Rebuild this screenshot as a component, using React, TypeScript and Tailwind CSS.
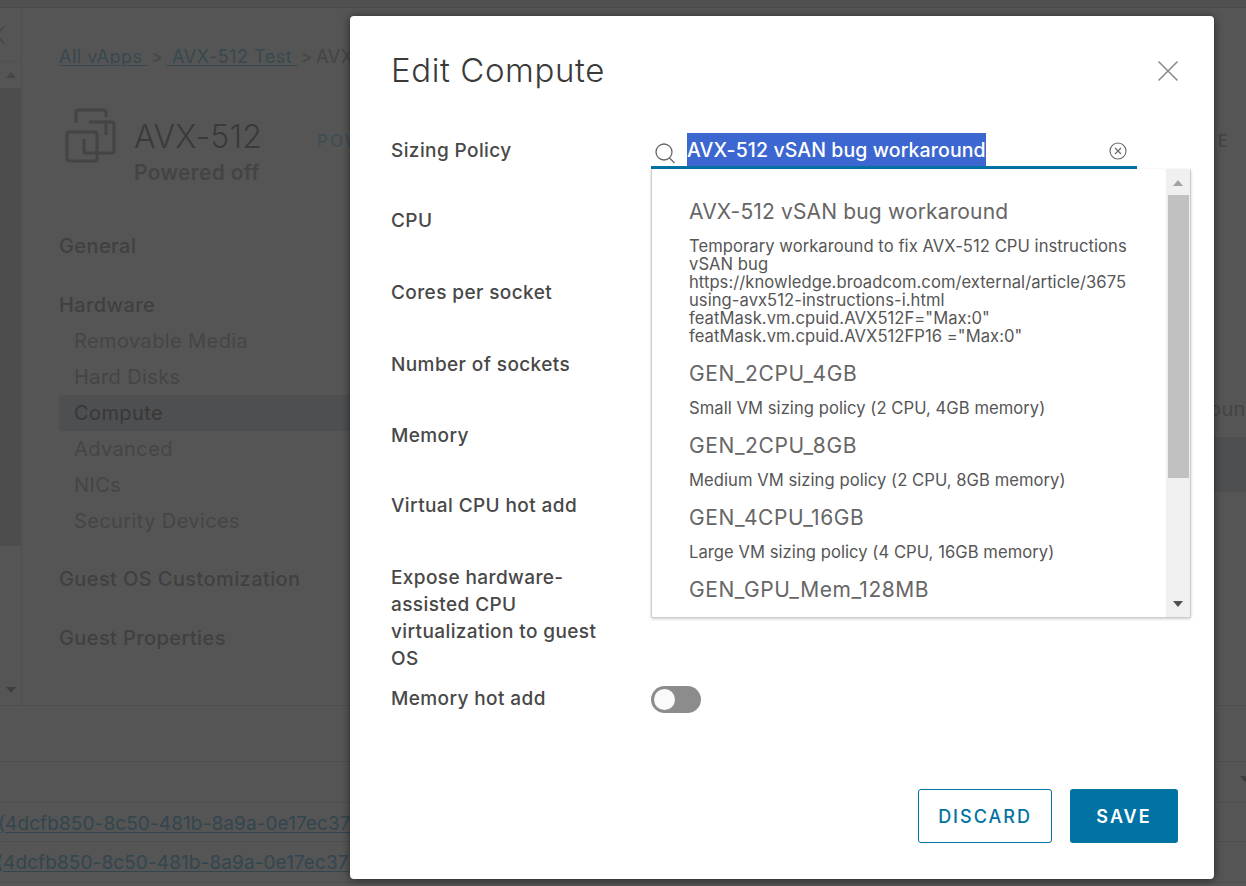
import { X } from "lucide-react";

const formRows = [
  { label: "Sizing Policy", height: "h-[70px]" },
  { label: "CPU", height: "h-[72px]" },
  { label: "Cores per socket", height: "h-[72px]" },
  { label: "Number of sockets", height: "h-[71px]" },
  { label: "Memory", height: "h-[70px]" },
  { label: "Virtual CPU hot add", height: "h-[72px]" },
];

const policies = [
  {
    name: "AVX-512 vSAN bug workaround",
    tracking: "tracking-[0.15px]",
    lines: [
      "Temporary workaround to fix AVX-512 CPU instructions",
      "vSAN bug",
      "https://knowledge.broadcom.com/external/article/3675",
      "using-avx512-instructions-i.html",
      'featMask.vm.cpuid.AVX512F="Max:0"',
      'featMask.vm.cpuid.AVX512FP16 ="Max:0"',
    ],
  },
  { name: "GEN_2CPU_4GB", tracking: "tracking-[0.6px]", lines: ["Small VM sizing policy (2 CPU, 4GB memory)"] },
  { name: "GEN_2CPU_8GB", tracking: "tracking-[0.6px]", lines: ["Medium VM sizing policy (2 CPU, 8GB memory)"] },
  { name: "GEN_4CPU_16GB", tracking: "tracking-[0.6px]", lines: ["Large VM sizing policy (4 CPU, 16GB memory)"] },
  { name: "GEN_GPU_Mem_128MB", tracking: "tracking-[0.55px]", lines: [] },
];

const hardwareItems = ["Removable Media", "Hard Disks", "Compute", "Advanced", "NICs", "Security Devices"];

function VappIcon() {
  return (
    <svg className="-mt-[13px] shrink-0" width="62" height="62" viewBox="0 0 62 62" fill="none" stroke="#444444" strokeWidth="3">
      <path d="M16 19V8a2 2 0 0 1 2-2h26a2 2 0 0 1 2 2v5" />
      <path d="M29 18h23a2 2 0 0 1 2 2v27a2 2 0 0 1-2 2H26a2 2 0 0 1-2-2V35" />
      <path d="M46 18v13" />
      <rect x="7" y="28" width="30" height="29" rx="2" />
    </svg>
  );
}

function Background() {
  return (
    <div className="flex h-full flex-col text-[#404040]">
      <div className="h-[8px] shrink-0 border-b border-[#4a4a4a] bg-[#505050]" />
      <div className="flex h-[698px] shrink-0 border-b border-[#4d4d4d]">
        <div className="flex w-[22px] shrink-0 flex-col border-r border-[#505050]">
          <div className="relative h-[54px] border-b border-[#505050]">
            <X className="absolute -left-[20px] top-[11px] text-[#444444]" size={32} strokeWidth={1} />
          </div>
          <div className="flex h-[26px] items-center justify-center">
            <div className="h-0 w-0 border-x-[5px] border-b-[6px] border-x-transparent border-b-[#464646]" />
          </div>
          <div className="h-[458px] bg-[#4d4d4d]" />
          <div className="mt-[141px] flex justify-center">
            <div className="h-0 w-0 border-x-[5px] border-t-[6px] border-x-transparent border-t-[#3f3f3f]" />
          </div>
        </div>
        <div className="min-w-0 flex-1 pl-[37px]">
          <div className="mt-[37px] flex h-[22px] items-center whitespace-nowrap text-[18px] tracking-[0.5px] text-[#384850]">
            <span className="underline decoration-1 underline-offset-2">All vApps&nbsp;</span>
            <span className="mx-[3px] text-[#444444]">&gt;</span>
            <span className="underline decoration-1 underline-offset-2">&nbsp;AVX-512 Test&nbsp;</span>
            <span className="mx-[3px] text-[#444444]">&gt;</span>
            <span className="text-[#444444]">AVX-512</span>
          </div>
          <div className="ml-[1px] mt-[50px] flex">
            <VappIcon />
            <div className="ml-[12px] w-[183px]">
              <div className="h-[40px] text-[32px] font-light leading-[40px] tracking-[0.2px] text-[#3a3a3a]">AVX-512</div>
              <div className="mt-[3px] text-[21px] font-semibold leading-[26px] tracking-[0.3px] text-[#444444]">Powered off</div>
            </div>
            <div className="mt-[12px] text-[17px] font-medium tracking-[2px] text-[#3f4d55]">POWER ON</div>
            <div className="ml-auto mr-[16px] mt-[12px] text-[17px] font-medium tracking-[2px] text-[#444444]">E</div>
          </div>
          <div className="mt-[46px] flex tracking-[0.4px]">
            <div className="w-[291px] shrink-0">
              <div className="text-[20px] font-medium leading-[28px]">General</div>
              <div className="mt-[31px] text-[20px] font-medium leading-[28px]">Hardware</div>
              <div className="mt-[4px]">
                {hardwareItems.map((item) => (
                  <div
                    key={item}
                    className={`h-[36px] rounded-l-[3px] pl-[15px] text-[20px] leading-[36px] ${
                      item === "Compute" ? "bg-[#4d4f51] text-[#383838]" : "text-[#454545]"
                    }`}
                  >
                    {item}
                  </div>
                ))}
              </div>
              <div className="mt-[26px] text-[20px] font-medium leading-[28px]">Guest OS Customization</div>
              <div className="mt-[31px] text-[20px] font-medium leading-[28px]">Guest Properties</div>
            </div>
            <div className="ml-[559px] flex-1 overflow-hidden">
              <div className="mt-[163px] whitespace-nowrap pl-[300px] text-[20px] leading-[28px] text-[#444444]">ound</div>
              <div className="mt-[14px] h-[55px] bg-[#4d4f51]" />
            </div>
          </div>
        </div>
      </div>
      <div className="h-[56px] shrink-0 border-b border-[#4d4d4d]" />
      <div className="-mr-[4px] flex h-[41px] shrink-0 items-center justify-end border-b border-[#4d4d4d] pb-[6px]">
        <div className="h-0 w-0 border-x-[5px] border-t-[6px] border-x-transparent border-t-[#3f3f3f]" />
      </div>
      <div className="h-[39px] shrink-0 overflow-hidden whitespace-nowrap border-b border-[#4d4d4d] text-[19px] leading-[41px] tracking-[0.1px] text-[#33464f]">
        <span className="-ml-[2px] inline-block underline decoration-1 underline-offset-2">(4dcfb850-8c50-481b-8a9a-0e17ec37</span>
      </div>
      <div className="h-[41px] shrink-0 overflow-hidden whitespace-nowrap border-b border-[#4d4d4d] text-[19px] leading-[41px] tracking-[0.1px] text-[#33464f]">
        <span className="-ml-[4px] inline-block underline decoration-1 underline-offset-2">(4dcfb850-8c50-481b-8a9a-0e17ec37</span>
      </div>
    </div>
  );
}

function PolicyDropdown() {
  return (
    <div className="absolute left-[301px] top-[153px] flex h-[449px] w-[540px] overflow-hidden rounded-[2px] border-x border-b border-[#cccccc] bg-white shadow-[0_1px_3px_rgba(0,0,0,0.2)]">
      <div className="min-w-0 flex-1 overflow-hidden pl-[37px] pt-[26px]">
        {policies.map((policy) => (
          <div key={policy.name} className="mb-[12px] whitespace-nowrap">
            <div className={`text-[21px] leading-[34px] text-[#666666] ${policy.tracking}`}>{policy.name}</div>
            {policy.lines.length > 0 && (
              <div className="mt-[8px] text-[16.6px] leading-[18px] tracking-[0.05px] text-[#565656]">
                {policy.lines.map((line) => (
                  <div key={line}>{line}</div>
                ))}
              </div>
            )}
          </div>
        ))}
      </div>
      <div className="flex w-[24px] shrink-0 flex-col items-center bg-[#f0f0f0]">
        <div className="mt-[11px] h-0 w-0 border-x-[5px] border-b-[6px] border-x-transparent border-b-[#a3a3a3]" />
        <div className="mt-[9px] h-[283px] w-[21px] bg-[#c1c1c1]" />
        <div className="mt-[123px] h-0 w-0 border-x-[5px] border-t-[6px] border-x-transparent border-t-[#505050]" />
      </div>
    </div>
  );
}

function Modal() {
  return (
    <div className="absolute left-[350px] top-[16px] h-[863px] w-[864px] rounded-[4px] bg-white shadow-[0_1px_8px_rgba(0,0,0,0.55)]">
      <div className="flex items-start pl-[41px] pr-[28px] pt-[33px]">
        <div className="flex-1 text-[33px] font-light leading-[42px] tracking-[0.6px] text-[#3a3a3a]">Edit Compute</div>
        <X className="mt-[4px] text-[#8c8c8c]" size={36} strokeWidth={1.1} />
      </div>
      <div className="pl-[41px] pt-[46px] text-[19px] font-[550] tracking-[0.4px] text-[#484848]">
        {formRows.map((row) => (
          <div key={row.label} className={`${row.height} leading-[28px]`}>
            {row.label}
          </div>
        ))}
        <div className="w-[230px] leading-[27px]">Expose hardware-assisted CPU virtualization to guest OS</div>
        <div className="mt-[13px] flex items-center">
          <div className="w-[260px] leading-[28px]">Memory hot add</div>
          <div className="flex h-[27px] w-[50px] items-center rounded-full bg-[#8c8c8c] pl-[3px]">
            <div className="h-[21px] w-[21px] rounded-full bg-[#fafafa]" />
          </div>
        </div>
      </div>
      <div className="absolute left-[301px] top-[117px] flex h-[36px] w-[486px] border-b-[3px] border-[#0072a3]">
        <svg className="ml-[3px] mt-[9px]" width="22" height="24" viewBox="0 0 22 24" fill="none" stroke="#666666">
          <circle cx="10" cy="10" r="8" strokeWidth="1.3" />
          <path d="M15.5 16l5 5" strokeWidth="1.3" />
        </svg>
        <span className="ml-[11px] h-[33px] bg-[#3c66d0] text-[19.5px] font-medium leading-[35px] tracking-[0.1px] text-white">AVX-512 vSAN bug workaround</span>
        <svg className="ml-auto mr-[10px] mt-[9px]" width="18" height="18" viewBox="0 0 18 18" fill="none" stroke="#666666" strokeWidth="1.1">
          <circle cx="9" cy="9" r="8" />
          <path d="M6 6l6 6M12 6l-6 6" />
        </svg>
      </div>
      <PolicyDropdown />
      <div className="absolute bottom-[36px] right-[36px] flex gap-[18px]">
        <button className="h-[54px] w-[134px] rounded-[3px] border border-[#0072a3] text-[18px] font-medium tracking-[2px] text-[#0072a3]">DISCARD</button>
        <button className="h-[54px] w-[108px] rounded-[3px] bg-[#0072a3] text-[18px] font-semibold tracking-[2px] text-white">SAVE</button>
      </div>
    </div>
  );
}

export default function App() {
  return (
    <div className="relative h-[886px] w-[1246px] overflow-hidden bg-[#555555] font-['Inter',sans-serif]">
      <Background />
      <Modal />
    </div>
  );
}
